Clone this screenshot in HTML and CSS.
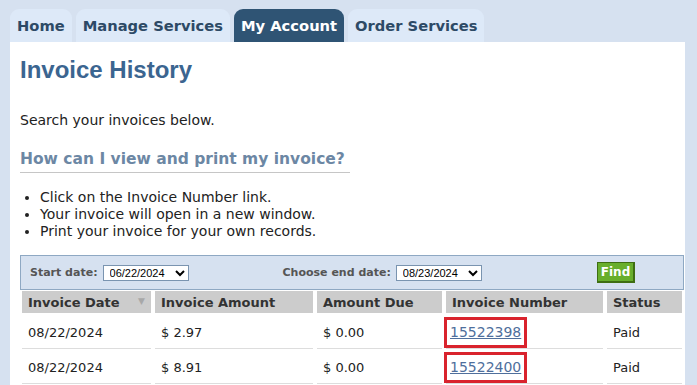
FILE: index.html
```html
<!DOCTYPE html>
<html>
<head>
<title>Invoice History</title>
<meta charset="UTF-8">
<link rel="stylesheet" href="styles.css">
</head>
<body>
<div class="tabs">
  <a class="tab">Home</a>
  <a class="tab">Manage Services</a>
  <a class="tab active">My Account</a>
  <a class="tab">Order Services</a>
</div>
<div class="panel">
  <h1>Invoice History</h1>
  <p class="intro">Search your invoices below.</p>
  <h2>How can I view and print my invoice?</h2>
  <ul class="steps">
    <li>Click on the Invoice Number link.</li>
    <li>Your invoice will open in a new window.</li>
    <li>Print your invoice for your own records.</li>
  </ul>
  <form class="filter">
    <label>Start date:</label>
    <select class="date"><option>06/22/2024</option></select>
    <label class="end">Choose end date:</label>
    <select class="date"><option>08/23/2024</option></select>
    <button type="button" class="find">Find</button>
  </form>
  <table class="invoices">
    <tr>
      <th class="c-date">Invoice Date <span class="sort">&#9660;</span></th>
      <th class="c-amt">Invoice Amount</th>
      <th class="c-due">Amount Due</th>
      <th class="c-num">Invoice Number</th>
      <th class="c-status">Status</th>
    </tr>
    <tr class="first">
      <td>08/22/2024</td>
      <td>$ 2.97</td>
      <td>$ 0.00</td>
      <td><span class="mark"><a href="#">15522398</a></span></td>
      <td>Paid</td>
    </tr>
    <tr>
      <td>08/22/2024</td>
      <td>$ 8.91</td>
      <td>$ 0.00</td>
      <td><span class="mark"><a href="#">15522400</a></span></td>
      <td>Paid</td>
    </tr>
  </table>
</div>
</body>
</html>
```
FILE: styles.css
```css
body { margin: 0; padding: 0; background: #d6e1f0; font-family: "DejaVu Sans", Verdana, sans-serif; color: #222; overflow: hidden; }
.tabs { display: flex; gap: 4px; padding: 9px 0 0 10px; }
.tab { height: 33px; line-height: 34px; padding: 0 7px; background: #dde9f8; color: #2d4a66; font-weight: bold; font-size: 14.7px; border-radius: 9px 9px 0 0; }
.tab.active { background: #2f5474; color: #fff; }
.panel { background: #fff; margin: 0 12px 0 10px; padding: 1px 1px 0 10px; height: 400px; }
h1 { font-family: "Liberation Sans", Arial, sans-serif; font-size: 24px; color: #3b6590; margin: 13px 0 0; }
.intro { font-size: 14px; margin: 28px 0 0; }
h2 { font-size: 15.5px; color: #6c87a4; margin: 22px 0 0; padding: 0 5px 4px 0; border-bottom: 1px solid #c6c6c6; width: fit-content; }
.steps { font-size: 14px; margin: 16px 0 0; padding-left: 20px; line-height: 17px; }
.filter { display: flex; align-items: center; margin-top: 15px; height: 33px; background: #d6e1f0; border: 1px solid #8ea8c3; font-size: 11px; }
.filter label { font-weight: bold; color: #555; margin: 0 5px 0 9px; }
.filter .end { margin-left: 94px; }
.date { font-family: "Liberation Sans", Arial, sans-serif; font-size: 11px; height: 16px; width: 86px; padding: 0 0 0 2px; border: 1px solid #7a94b0; background: #fff; }
.find { margin-left: 115px; background: #68ae2c; border: 1px solid #3e6e12; border-right-width: 2px; border-bottom-width: 2px; color: #fff; font-family: inherit; font-weight: bold; font-size: 12px; height: 21px; padding: 0 3px; }
.invoices { border-spacing: 4px 0; margin: 1px 0 0 -2px; width: 668px; font-size: 13px; }
.invoices th { background: #cccccc; color: #333; text-align: left; padding: 0 6px; height: 22px; font-size: 13px; position: relative; }
.invoices td { height: 32px; padding: 2px 6px 0; border-bottom: 1px solid #dddddd; }
.invoices .first td { height: 31px; padding-top: 4px; }
.c-date { width: 117px; }
.c-amt { width: 146px; }
.c-due { width: 113px; }
.c-num { width: 145px; }
.sort { position: absolute; right: 6px; top: 5px; font-size: 9px; color: #a8a8a8; }
.mark { display: inline-block; border: 3px solid #d9232d; padding: 4px 3px 5px 3px; margin-left: -8px; }
.mark a { color: #4f6f9c; font-size: 14px; }
```
